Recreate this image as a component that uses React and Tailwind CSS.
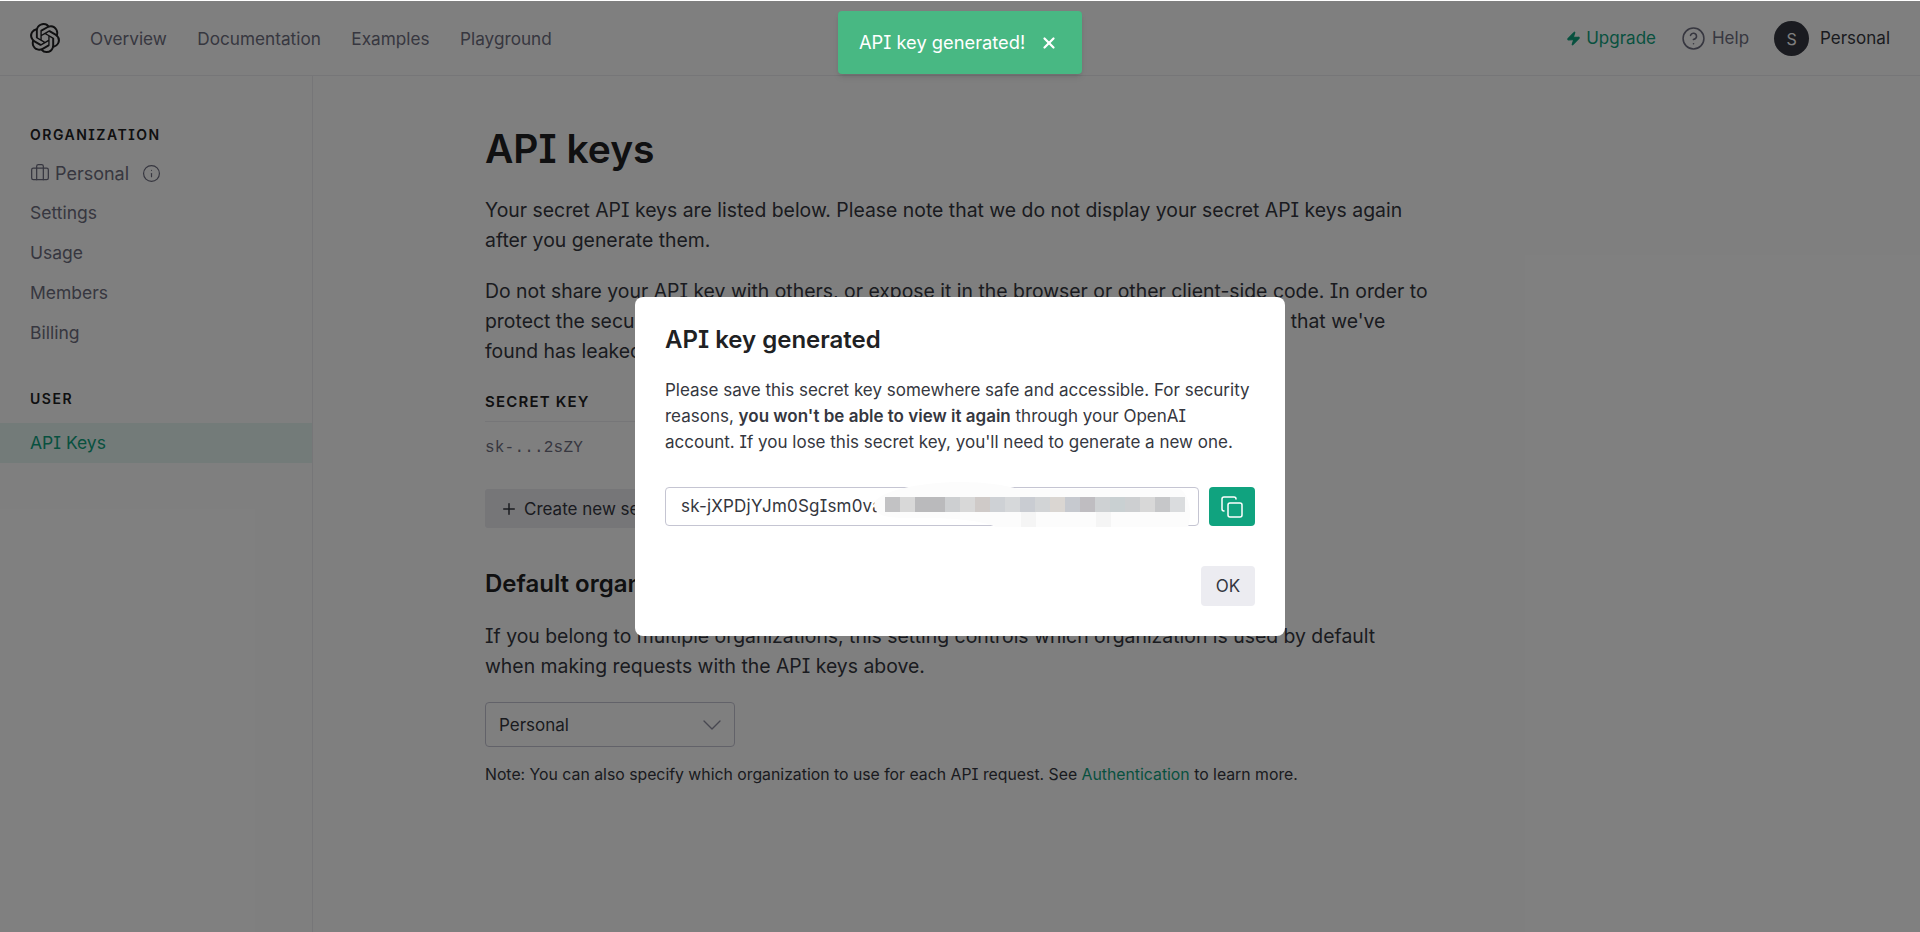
import { Briefcase, ChevronDown, CircleHelp, Copy, Info, Plus, X, Zap } from 'lucide-react'

const navLinks = ['Overview', 'Documentation', 'Examples', 'Playground']
const orgLinks = ['Settings', 'Usage', 'Members', 'Billing']
const blurBlocks = [
  '#c2c2c4', '#d8d8d8', '#bababc', '#bababc', '#cdcfd1', '#d8d8d8', '#cfcac8', '#ced1d5', '#d6d8da', '#c9ccd2',
  '#d2d4d6', '#dad6d2', '#c6c9cf', '#bfbdc1', '#ced1d3', '#c9d0d2', '#cdcfd1', '#d8d8d8', '#c6c7c9', '#dadcde',
]

function OpenAILogo({ className }) {
  return (
    <svg viewBox="0 0 24 24" fill="currentColor" className={className}>
      <path d="M22.2819 9.8211a5.9847 5.9847 0 0 0-.5157-4.9108 6.0462 6.0462 0 0 0-6.5098-2.9A6.0651 6.0651 0 0 0 4.9807 4.1818a5.9847 5.9847 0 0 0-3.9977 2.9 6.0462 6.0462 0 0 0 .7427 7.0966 5.98 5.98 0 0 0 .511 4.9107 6.051 6.051 0 0 0 6.5146 2.9001A5.9847 5.9847 0 0 0 13.2599 24a6.0557 6.0557 0 0 0 5.7718-4.2058 5.9894 5.9894 0 0 0 3.9977-2.9001 6.0557 6.0557 0 0 0-.7475-7.073zm-9.022 12.6081a4.4755 4.4755 0 0 1-2.8764-1.0408l.1419-.0804 4.7783-2.7582a.7948.7948 0 0 0 .3927-.6813v-6.7369l2.02 1.1686a.071.071 0 0 1 .038.052v5.5826a4.504 4.504 0 0 1-4.4945 4.4944zm-9.6607-4.1254a4.4708 4.4708 0 0 1-.5346-3.0137l.142.0852 4.783 2.7582a.7712.7712 0 0 0 .7806 0l5.8428-3.3685v2.3324a.0804.0804 0 0 1-.0332.0615L9.74 19.9502a4.4992 4.4992 0 0 1-6.1408-1.6464zM2.3408 7.8956a4.485 4.485 0 0 1 2.3655-1.9728V11.6a.7664.7664 0 0 0 .3879.6765l5.8144 3.3543-2.0201 1.1685a.0757.0757 0 0 1-.071 0l-4.8303-2.7865A4.504 4.504 0 0 1 2.3408 7.872zm16.5963 3.8558L13.1038 8.364 15.1192 7.2a.0757.0757 0 0 1 .071 0l4.8303 2.7913a4.4944 4.4944 0 0 1-.6765 8.1042v-5.6772a.79.79 0 0 0-.407-.667zm2.0107-3.0231l-.142-.0852-4.7735-2.7818a.7759.7759 0 0 0-.7854 0L9.409 9.2297V6.8974a.0662.0662 0 0 1 .0284-.0615l4.8303-2.7866a4.4992 4.4992 0 0 1 6.6802 4.66zM8.3065 12.863l-2.02-1.1638a.0804.0804 0 0 1-.038-.0567V6.0742a4.4992 4.4992 0 0 1 7.3757-3.4537l-.142.0805L8.704 5.459a.7948.7948 0 0 0-.3927.6813zm1.0976-2.3654l2.602-1.4998 2.6069 1.4998v2.9994l-2.5974 1.4997-2.6067-1.4997Z" />
    </svg>
  )
}

function Header() {
  return (
    <header className="flex items-center h-[75px] shrink-0 border-b border-[#ececf1] box-content pl-[30px] pr-[30px]">
      <OpenAILogo className="w-[30px] h-[30px] text-[#202123]" />
      <nav className="flex items-center gap-[30.5px] ml-[30px] mt-[2px] text-[17.2px] text-[#6e6e80]">
        {navLinks.map((link) => (
          <span key={link}>{link}</span>
        ))}
      </nav>
      <div className="flex items-center ml-auto mt-[2px] text-[17px]">
        <span className="flex items-center gap-[5px] text-[#10a37f]">
          <Zap className="w-[15px] h-[15px] fill-current" />
          Upgrade
        </span>
        <span className="flex items-center gap-[6px] ml-[25px] text-[#6e6e80]">
          <CircleHelp className="w-[25px] h-[25px]" strokeWidth={1.5} />
          Help
        </span>
        <span className="flex items-center justify-center w-[35px] h-[35px] ml-[25px] rounded-full bg-[#353740] text-white text-[16px]">S</span>
        <span className="ml-[11px] text-[#353740]">Personal</span>
      </div>
    </header>
  )
}

function Sidebar() {
  return (
    <aside className="w-[313px] shrink-0 border-r border-[#ececf1] pt-[49px] text-[17.5px] text-[#6e6e80]">
      <h3 className="pl-[30px] h-5 leading-5 text-[14px] font-semibold tracking-[1.5px] text-[#202123]">ORGANIZATION</h3>
      <div className="flex items-center h-10 mt-[8px] pl-[30px] text-[18px]">
        <Briefcase className="w-[20px] h-[20px]" strokeWidth={1.5} />
        <span className="ml-[5px]">Personal</span>
        <Info className="w-[19px] h-[19px] ml-[13px]" strokeWidth={1.5} />
      </div>
      {orgLinks.map((link) => (
        <div key={link} className="h-10 leading-10 pl-[30px]">{link}</div>
      ))}
      <h3 className="pl-[30px] h-5 leading-5 mt-[36px] text-[14px] font-semibold tracking-[1.5px] text-[#202123]">USER</h3>
      <div className="h-10 leading-10 mt-[14px] pl-[30px] bg-[#e7f6f2] text-[#10a37f]">API Keys</div>
    </aside>
  )
}

function Main() {
  return (
    <main className="flex-1 pl-[172px] pt-[48px] text-[19.4px] leading-[30px] text-[#353740]">
      <div className="w-[936px]">
        <h1 className="text-[39px] leading-[50px] font-semibold text-[#202123]">API keys</h1>
        <p className="mt-[21px]">
          Your secret API keys are listed below. Please note that we do not display your secret API keys again after you generate them.
        </p>
        <p className="mt-[21px] w-[948px]">
          Do not share your API key with others, or expose it in the browser or other client-side code. In order to protect the security of your account, OpenAI may also automatically rotate any API key that we've found has leaked publicly.
        </p>
        <div className="w-[700px] mt-[26px] pb-[9px] border-b border-[#ececf1] text-[15px] leading-5 font-semibold tracking-[1.2px] text-[#202123]">SECRET KEY</div>
        <div className="mt-[12px] h-[28px] leading-[28px] font-['Liberation_Mono',monospace] text-[16px] tracking-[0.2px] text-[#6e6e80]">sk-...2sZY</div>
        <button className="flex items-center h-[39px] mt-[27px] px-[15px] gap-[6px] rounded-[3px] bg-[#ececf1] text-[17px] text-[#353740]">
          <Plus className="w-[18px] h-[18px]" />
          Create new secret key
        </button>
        <h2 className="mt-[39px] text-[24px] leading-[34px] font-semibold text-[#202123]">Default organization</h2>
        <p className="mt-[20px]">
          If you belong to multiple organizations, this setting controls which organization is used by default when making requests with the API keys above.
        </p>
        <div className="flex items-center justify-between w-[250px] h-[45px] mt-[21px] pl-[13px] pr-[6px] rounded-[4px] border border-[#c5c5d2] text-[17px]">
          Personal
          <ChevronDown className="w-[32px] h-[32px] text-[#8e8ea0]" strokeWidth={1} />
        </div>
        <p className="mt-[16px] text-[15.8px] leading-[24px]">
          Note: You can also specify which organization to use for each API request. See <span className="text-[#10a37f]">Authentication</span> to learn more.
        </p>
      </div>
    </main>
  )
}

function KeyModal() {
  return (
    <div className="absolute left-[635px] top-[297px] w-[650px] h-[339px] rounded-[8px] bg-white px-[30px] pt-[27px] text-[#353740]">
      <h2 className="text-[24px] leading-[32px] font-semibold text-[#202123]">API key generated</h2>
      <p className="mt-[21px] text-[17px] leading-[26px]">
        Please save this secret key somewhere safe and accessible. For security reasons, <strong className="font-semibold">you won't be able to view it again</strong> through your OpenAI account. If you lose this secret key, you'll need to generate a new one.
      </p>
      <div className="flex gap-[10px] mt-[32px]">
        <div className="relative flex-1 h-[39px] leading-[37px] pl-[15px] rounded-[4px] border border-[#c5c5d2] text-[17px] tracking-[0.2px]">
          sk-jXPDjYJm0SgIsm0va
          {/* redaction smear painted over the rest of the key */}
          <svg viewBox="0 0 340 50" className="absolute left-[200px] top-[-6px] w-[340px] h-[50px]">
            <path d="M8 24C6 10 54 0 94 0C119 0 139 3 152 7L314 7C324 13 326 33 322 45L130 45C114 38 84 36 64 36C34 36 10 38 8 24Z" fill="#fcfcfc" />
            <rect x="155" y="30" width="15" height="15" fill="#f5f5f5" />
            <rect x="230" y="30" width="15" height="15" fill="#f5f5f5" />
          </svg>
          <div className="absolute left-[219px] top-[9px] flex">
            {blurBlocks.map((color, i) => (
              <span key={i} className="w-[15px] h-[15px]" style={{ backgroundColor: color }} />
            ))}
          </div>
        </div>
        <button className="flex items-center justify-center w-[46px] h-[39px] rounded-[4px] bg-[#10a37f] text-white">
          <Copy className="w-[24px] h-[24px]" strokeWidth={1.5} />
        </button>
      </div>
      <div className="flex justify-end mt-[40px]">
        <button className="w-[54px] h-[40px] pt-[1px] rounded-[4px] bg-[#ececf1] text-[17px]">OK</button>
      </div>
    </div>
  )
}

function Toast() {
  return (
    <div className="absolute left-[838px] top-[11px] flex items-center w-[244px] h-[63px] pl-[21px] rounded-[4px] bg-[#48b883] text-white text-[18.3px] shadow-md">
      API key generated!
      <X className="w-[18px] h-[18px] ml-[15px]" strokeWidth={3} />
    </div>
  )
}

export default function App() {
  return (
    <div className="relative flex flex-col w-[1920px] h-[932px] overflow-hidden bg-white font-['Inter',sans-serif] [font-feature-settings:'cv08']">
      <Header />
      <div className="flex flex-1">
        <Sidebar />
        <Main />
      </div>
      <div className="absolute left-0 right-0 top-px bottom-0 bg-black/50" />
      <KeyModal />
      <Toast />
    </div>
  )
}
